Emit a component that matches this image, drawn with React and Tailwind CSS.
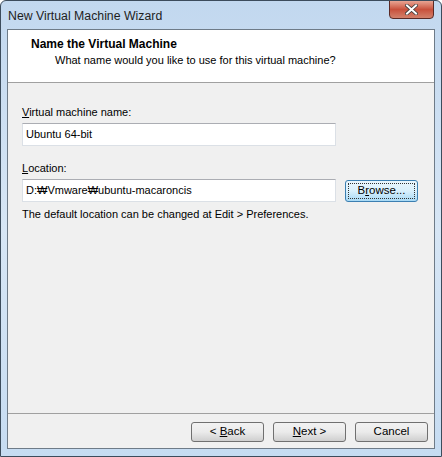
import React from "react";

const font = { fontFamily: '"Liberation Sans", Arial, sans-serif' };

function WinButton({ children, className = "" }) {
  return (
    <button
      className={
        "h-[20px] rounded-[3px] border border-[#707070] bg-gradient-to-b from-[#f2f2f2] via-[#ebebeb] to-[#cfcfcf] text-[11.5px] text-black leading-none " +
        className
      }
    >
      {children}
    </button>
  );
}

export default function App() {
  return (
    <div
      className="w-[442px] h-[457px] flex flex-col border border-[#3c4c5c] rounded-t-[6px] bg-gradient-to-b from-[#c2d8ef] via-[#d7e6f5] to-[#c6dcf2] overflow-hidden"
      style={font}
    >
      {/* Title bar */}
      <div className="h-[28px] flex items-start justify-between pl-[7px] pr-[7px]">
        <span className="mt-[6px] text-[12.3px] text-[#1e1e1e]">New Virtual Machine Wizard</span>
        <div className="w-[45px] h-[19px] -mt-px rounded-b-[4px] border border-[#5a2a26] bg-gradient-to-b from-[#e8a493] via-[#c8503c] to-[#d2806b] flex items-center justify-center">
          <svg width="13" height="11" viewBox="0 0 13 11">
            <path d="M2 1.5 L11 9.5 M11 1.5 L2 9.5" stroke="#3b3b3b" strokeWidth="3.6" strokeLinecap="square" />
            <path d="M2 1.5 L11 9.5 M11 1.5 L2 9.5" stroke="#ffffff" strokeWidth="2" strokeLinecap="square" />
          </svg>
        </div>
      </div>

      {/* Client area */}
      <div className="flex-1 mx-[6px] border border-[#6e7b88] bg-[#f0f0f0] flex flex-col">
        {/* Header */}
        <div className="h-[53px] bg-white border-b border-[#a0a0a0] pt-[7px]">
          <div className="pl-[23px] text-[12px] font-bold text-black leading-[15px]">Name the Virtual Machine</div>
          <div className="pl-[47px] mt-[1px] text-[11px] text-black leading-[15px]">
            What name would you like to use for this virtual machine?
          </div>
        </div>

        {/* Body */}
        <div className="flex-1 pl-[14px] pt-[22px] text-[11px] text-black">
          <div className="leading-[15px]">
            <span className="underline">V</span>irtual machine name:
          </div>
          <div className="mt-[3px] w-[314px] h-[23px] border border-[#dbe0e6] border-t-[#abadb3] bg-white flex items-center pl-[3px]">
            Ubuntu 64-bit
          </div>
          <div className="mt-[15px] leading-[15px]">
            <span className="underline">L</span>ocation:
          </div>
          <div className="mt-[3px] flex items-center gap-[9px]">
            <div className="w-[314px] h-[23px] border border-[#dbe0e6] border-t-[#abadb3] bg-white flex items-center pl-[3px]">
              D:₩Vmware₩ubuntu-macaroncis
            </div>
            <button className="w-[73px] h-[22px] rounded-[3px] border border-[#3c7fb1] bg-gradient-to-b from-[#eaf6fd] via-[#d9f0fc] to-[#a7d9f5] p-[2px]">
              <span className="flex items-center justify-center w-full h-full border border-dotted border-[#333] text-[11.5px] leading-none">
                B<span className="underline">r</span>owse...
              </span>
            </button>
          </div>
          <div className="mt-[5px] leading-[15px]">
            The default location can be changed at Edit &gt; Preferences.
          </div>
        </div>

        {/* Footer */}
        <div className="h-[35px] border-t border-[#a0a0a0] flex items-start justify-end pt-[8px] pr-[6px] gap-[9px]">
          <WinButton className="w-[73px]">
            &lt; <span className="underline">B</span>ack
          </WinButton>
          <WinButton className="w-[73px]">
            <span className="underline">N</span>ext &gt;
          </WinButton>
          <WinButton className="w-[73px]">Cancel</WinButton>
        </div>
      </div>

      {/* Bottom frame */}
      <div className="h-[7px]" />
    </div>
  );
}
